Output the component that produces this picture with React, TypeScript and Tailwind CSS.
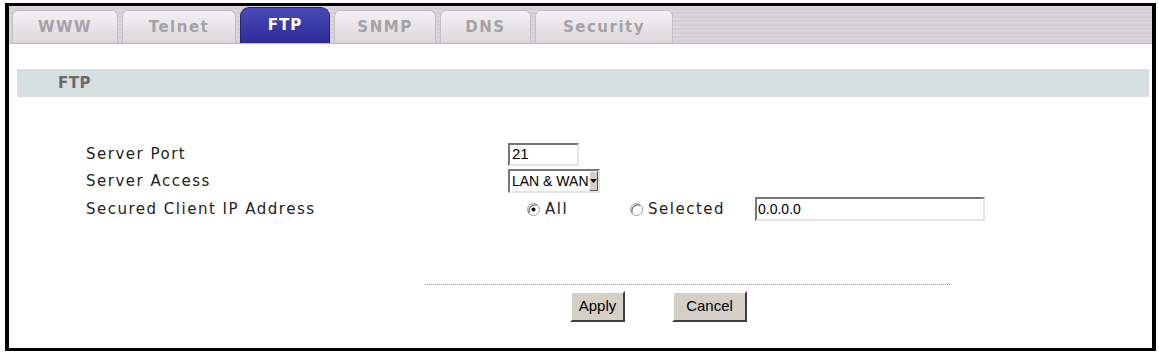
import React from 'react';

const tabs = [
  { label: 'WWW', w: 'w-[106px]' },
  { label: 'Telnet', w: 'w-[114px]' },
  { label: 'FTP', w: 'w-[90px]', active: true },
  { label: 'SNMP', w: 'w-[102px]' },
  { label: 'DNS', w: 'w-[91px]' },
  { label: 'Security', w: 'w-[138px]' },
];

function Radio({ checked }: { checked?: boolean }) {
  return (
    <svg width="13" height="13" viewBox="0 0 13 13" className="shrink-0">
      <circle cx="6.5" cy="6.5" r="6" fill="#ffffff" stroke="#a0a0a0" strokeWidth="1" />
      <path d="M2.3 10 A6 6 0 0 1 10 2.3" fill="none" stroke="#6f6f6f" strokeWidth="1.2" />
      {checked && <circle cx="6.5" cy="6.5" r="2" fill="#111111" />}
    </svg>
  );
}

export default function App() {
  return (
    <div className="w-[1159px] h-[356px] bg-white pt-[3px] pl-[5px]">
      <div className="w-[1151px] h-[348px] border-x-4 border-y-[3px] border-black bg-white flex flex-col">
        {/* tab strip */}
        <div className="h-[38px] flex items-end gap-[4px] pl-[3px] pr-[3px] border-b border-[#b9b2b9] bg-[repeating-linear-gradient(180deg,#dbd6db_0px,#dbd6db_2px,#d4cfd4_2px,#d4cfd4_4px)]">
          {tabs.map((t) =>
            t.active ? (
              <div
                key={t.label}
                className={`${t.w} h-[36px] rounded-t-[9px] bg-gradient-to-b from-[#4a4ab8] to-[#2c2c96] border border-[#22227a] border-b-0 flex items-center justify-center text-white font-bold text-[15px] tracking-[1px] [font-family:'DejaVu_Sans',sans-serif]`}
              >
                {t.label}
              </div>
            ) : (
              <div
                key={t.label}
                className={`${t.w} h-[33px] rounded-t-[6px] bg-gradient-to-b from-[#f3f1f3] to-[#dcd8dc] border border-[#c3bec3] border-b-0 flex items-center justify-center text-[#a5a2a5] font-bold text-[15px] tracking-[1.5px] [font-family:'DejaVu_Sans',sans-serif]`}
              >
                {t.label}
              </div>
            )
          )}
        </div>

        {/* section header */}
        <div className="mt-[25px] ml-[8px] mr-[3px] h-[28px] bg-[#d7e0e0] flex items-center pl-[41px] text-[15px] font-bold text-[#6a6a6a] tracking-[0.5px] [font-family:'DejaVu_Sans',sans-serif]">
          FTP
        </div>

        {/* form rows */}
        <div className="mt-[46px] pl-[77px] flex flex-col gap-[3px] text-[15px] tracking-[1.5px] text-[#222] [font-family:'DejaVu_Sans',sans-serif]">
          <div className="flex items-center h-[23px]">
            <div className="w-[422px]">Server Port</div>
            <div className="w-[71px] h-[23px] border-2 border-t-[#777] border-l-[#777] border-b-[#e4e4e4] border-r-[#e4e4e4] bg-white flex items-center pl-[2px] text-[15px] tracking-normal text-black [font-family:'Liberation_Sans',sans-serif]">
              21
            </div>
          </div>
          <div className="flex items-center h-[24px]">
            <div className="w-[422px]">Server Access</div>
            <div className="w-[92px] h-[24px] border-2 border-t-[#777] border-l-[#777] border-b-[#e4e4e4] border-r-[#e4e4e4] bg-white flex items-center text-[14px] tracking-normal text-black [font-family:'Liberation_Sans',sans-serif]">
              <span className="flex-1 pl-[2px] whitespace-nowrap">LAN &amp; WAN</span>
              <span className="w-[16px] h-[20px] bg-[#d4d0c8] border border-t-white border-l-white border-b-[#555] border-r-[#555] flex items-center justify-center">
                <svg width="7" height="4" viewBox="0 0 7 4">
                  <path d="M0 0 H7 L3.5 4 Z" fill="#000" />
                </svg>
              </span>
            </div>
          </div>
          <div className="flex items-center h-[26px]">
            <div className="w-[441px]">Secured Client IP Address</div>
            <Radio checked />
            <span className="ml-[5px] w-[85px]">All</span>
            <Radio />
            <span className="ml-[5px] w-[107px]">Selected</span>
            <div className="w-[230px] h-[24px] border-2 border-t-[#777] border-l-[#777] border-b-[#e4e4e4] border-r-[#e4e4e4] bg-white flex items-center pl-[1px] text-[14px] tracking-normal text-black [font-family:'Liberation_Sans',sans-serif]">
              0.0.0.0
            </div>
          </div>
        </div>

        {/* footer */}
        <div className="mt-[62px] ml-[416px] w-[525px] border-t border-dotted border-[#9a9a9a]" />
        <div className="mt-[6px] ml-[561px] flex gap-[47px] [font-family:'Liberation_Sans',sans-serif] text-[15px] text-black">
          <div className="w-[55px] h-[31px] bg-[#d4d0c8] border-2 border-t-white border-l-white border-b-[#404040] border-r-[#404040] flex items-center justify-center">
            Apply
          </div>
          <div className="w-[75px] h-[31px] bg-[#d4d0c8] border-2 border-t-white border-l-white border-b-[#404040] border-r-[#404040] flex items-center justify-center">
            Cancel
          </div>
        </div>
      </div>
    </div>
  );
}
